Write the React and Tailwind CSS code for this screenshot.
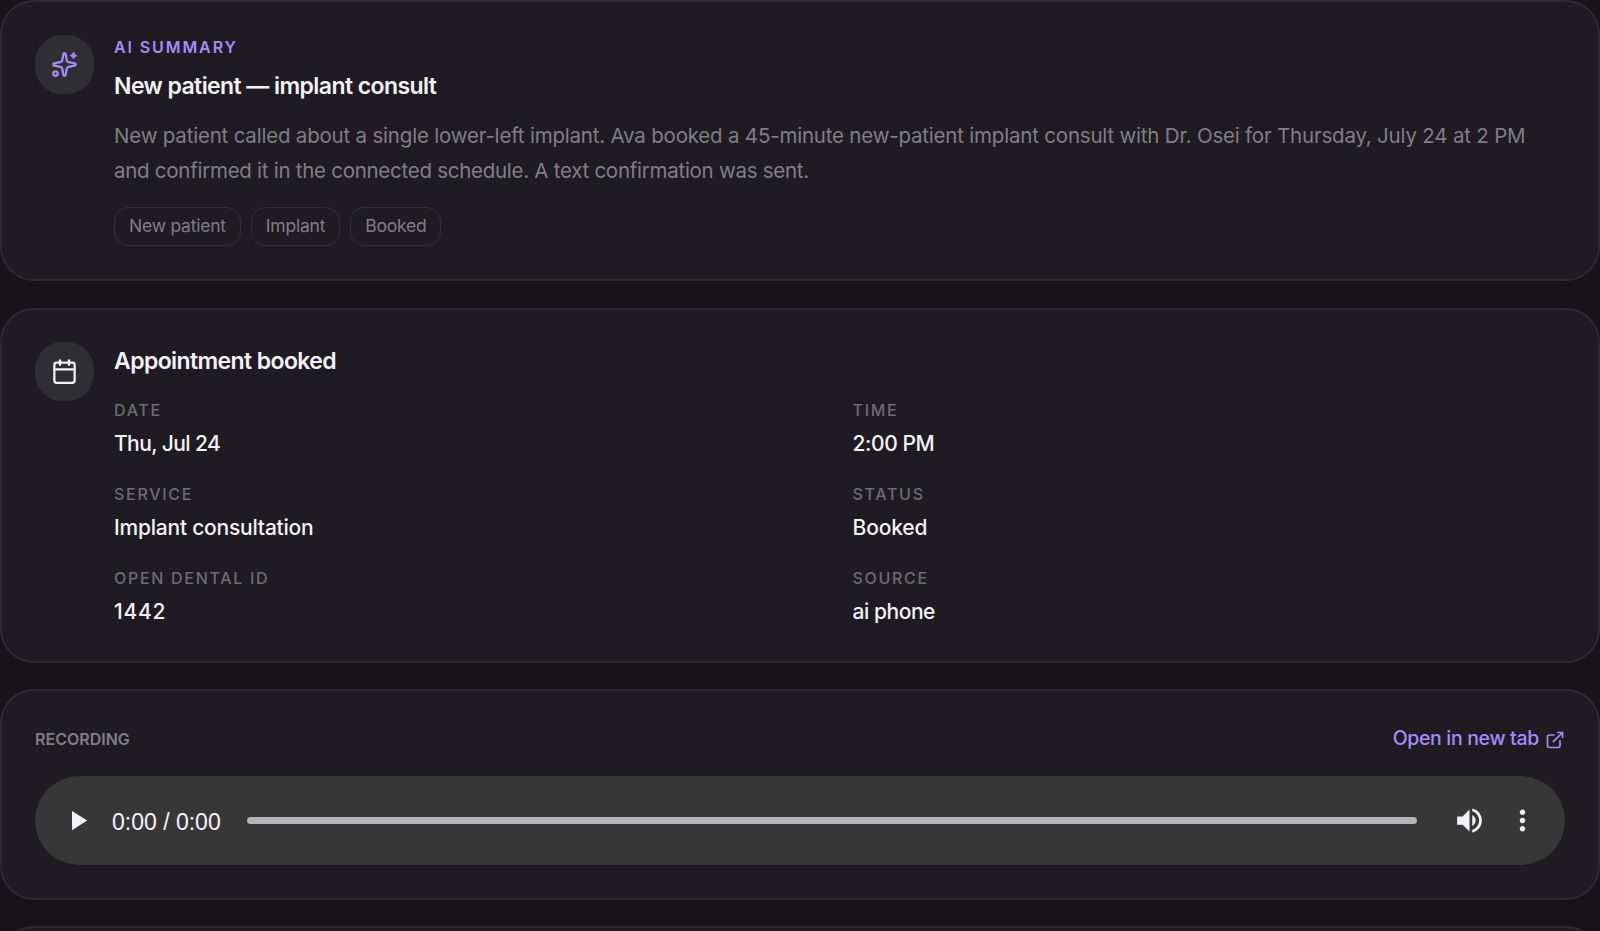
import { Calendar, ExternalLink, Sparkles } from 'lucide-react'

const tags = ['New patient', 'Implant', 'Booked']

const details = [
  { label: 'Date', value: 'Thu, Jul 24', tracking: 'tracking-[-0.6px]' },
  { label: 'Time', value: '2:00 PM', tracking: 'tracking-[-0.4px]' },
  { label: 'Service', value: 'Implant consultation', tracking: 'tracking-[-0.22px]' },
  { label: 'Status', value: 'Booked', tracking: 'tracking-[-0.15px]' },
  { label: 'Open Dental ID', value: '1442', tracking: 'tracking-[0.7px]' },
  { label: 'Source', value: 'ai phone', tracking: 'tracking-[-0.45px]' },
]

function Card({ className, children }) {
  return (
    <section className={`shrink-0 rounded-[34px] border-2 border-[#2d2b31] bg-[#1e1b22] px-[33px] ${className}`}>
      {children}
    </section>
  )
}

function IconBadge({ children }) {
  return (
    <div className="flex h-[59px] w-[59px] shrink-0 items-center justify-center rounded-[27px] bg-[#2f2e32]">
      {children}
    </div>
  )
}

function AudioPlayer() {
  return (
    <div className="mt-[23px] flex h-[89px] items-center rounded-full bg-[#373737] pl-[26px] pr-[26px] text-[#f4f2f7]">
      <svg className="h-[33px] w-[33px] shrink-0" viewBox="0 0 24 24" fill="currentColor">
        <path d="M8 5v14l11-7z" />
      </svg>
      <span className="ml-[18px] w-[109px] pt-[3px] whitespace-nowrap font-['Liberation_Sans',sans-serif] text-[23px] leading-none">
        0:00 / 0:00
      </span>
      <div className="ml-[26px] h-[7px] flex-1 rounded-full bg-[#b5b2b8]" />
      <svg className="ml-[36px] h-[33px] w-[33px] shrink-0" viewBox="0 0 24 24" fill="currentColor">
        <path d="M3 9v6h4l5 5V4L7 9H3zm13.5 3c0-1.77-1.02-3.29-2.5-4.03v8.05c1.48-.73 2.5-2.25 2.5-4.02zM14 3.23v2.06c2.89.86 5 3.54 5 6.71s-2.11 5.85-5 6.71v2.06c4.01-.91 7-4.49 7-8.77s-2.99-7.86-7-8.77z" />
      </svg>
      <svg className="ml-[20px] h-[33px] w-[33px] shrink-0" viewBox="0 0 24 24" fill="currentColor">
        <path d="M12 8c1.1 0 2-.9 2-2s-.9-2-2-2-2 .9-2 2 .9 2 2 2zm0 2c-1.1 0-2 .9-2 2s.9 2 2 2 2-.9 2-2-.9-2-2-2zm0 6c-1.1 0-2 .9-2 2s.9 2 2 2 2-.9 2-2-.9-2-2-2z" />
      </svg>
    </div>
  )
}

export default function App() {
  return (
    <main className="flex h-[931px] flex-col overflow-hidden bg-[#161419] font-['Inter',sans-serif] text-[#f4f2f7]">
      {/* AI summary */}
      <Card className="flex h-[281px] gap-5 pt-[33px]">
        <IconBadge>
          <Sparkles size={27} strokeWidth={2} className="text-[#a78bfa]" />
        </IconBadge>
        <div className="min-w-0 flex-1">
          <p className="mt-[2px] text-[16px] leading-[20px] font-semibold tracking-[1.9px] text-[#a78bfa] uppercase">
            AI Summary
          </p>
          <h2 className="mt-[14px] text-[23px] leading-[30px] font-semibold tracking-[-0.58px]">
            New patient — implant consult
          </h2>
          <p className="mt-[17px] text-[20.5px] leading-[35px] tracking-[-0.2px] whitespace-nowrap text-[#817e85]">
            New patient called about a single lower-left implant. Ava booked a 45-minute new-patient implant consult with Dr. Osei for Thursday, July 24 at 2 PM
            <br />
            <span className="tracking-[-0.27px]">
              and confirmed it in the connected schedule. A text confirmation was sent.
            </span>
          </p>
          <div className="mt-[19px] flex gap-[10px]">
            {tags.map((tag) => (
              <span
                key={tag}
                className="flex h-[39px] items-center rounded-[14px] border border-[#323036] px-[14px] pb-px text-[17.5px] leading-none tracking-[-0.22px] text-[#817e85]"
              >
                {tag}
              </span>
            ))}
          </div>
        </div>
      </Card>

      {/* Appointment */}
      <Card className="mt-[27px] flex h-[355px] gap-5 pt-8">
        <IconBadge>
          <Calendar size={27} strokeWidth={2} />
        </IconBadge>
        <div className="min-w-0 flex-1">
          <h2 className="mt-[4px] text-[23px] leading-[30px] font-semibold tracking-[-0.6px]">Appointment booked</h2>
          <dl className="mt-[21px] grid grid-cols-2 gap-x-[26px]">
            {details.map((item) => (
              <div key={item.label} className="h-[84px]">
                <dt className="text-[16px] leading-[26px] font-medium tracking-[1.7px] text-[#6e6b72] uppercase">
                  {item.label}
                </dt>
                <dd className={`mt-[5px] text-[21px] leading-[32px] font-medium ${item.tracking}`}>{item.value}</dd>
              </div>
            ))}
          </dl>
        </div>
      </Card>

      {/* Recording */}
      <Card className="mt-[26px] h-[211px] pt-[33px]">
        <div className="flex h-[29px] items-center justify-between">
          <h3 className="text-[16px] leading-none font-semibold text-[#817e85] uppercase">Recording</h3>
          <a
            href="#recording"
            className="flex items-center gap-[6px] text-[19.5px] leading-none font-medium tracking-[-0.33px] text-[#a78bfa]"
          >
            Open in new tab
            <ExternalLink size={20} strokeWidth={2} className="mt-[2px]" />
          </a>
        </div>
        <AudioPlayer />
      </Card>

      <Card className="mt-[26px] h-[211px]" />
    </main>
  )
}
